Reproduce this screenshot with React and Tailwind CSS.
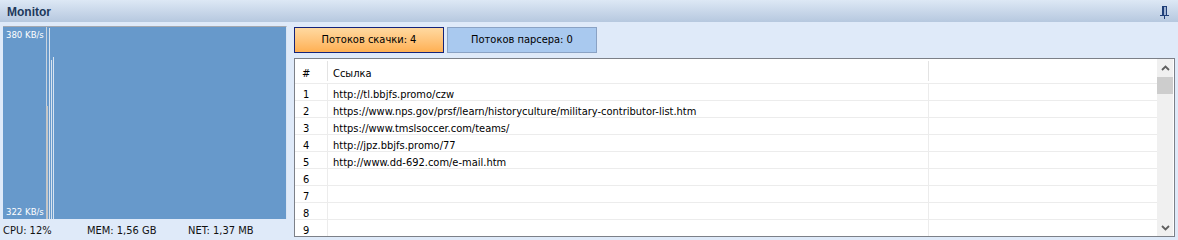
import React from "react";

const rows = [
  "http://tl.bbjfs.promo/czw",
  "https://www.nps.gov/prsf/learn/historyculture/military-contributor-list.htm",
  "https://www.tmslsoccer.com/teams/",
  "http://jpz.bbjfs.promo/77",
  "http://www.dd-692.com/e-mail.htm",
  "",
  "",
  "",
  "",
];

function Pin() {
  return (
    <svg width="10" height="13" viewBox="0 0 10 13" className="block">
      <rect x="2" y="0" width="5" height="9" fill="#9fb3d3" />
      <rect x="2" y="0" width="2" height="9" fill="#1f3f78" />
      <rect x="2" y="0" width="5" height="1" fill="#1f3f78" />
      <rect x="6" y="0" width="1" height="9" fill="#1f3f78" />
      <rect x="0" y="9" width="9" height="1" fill="#1f3f78" />
      <rect x="4" y="10" width="1" height="3" fill="#1f3f78" />
    </svg>
  );
}

export default function App() {
  return (
    <div className="w-[1178px] h-[240px] flex flex-col bg-[#dfeaf9] overflow-hidden text-black font-['DejaVu_Sans_Condensed','DejaVu_Sans',sans-serif]">
      <div className="h-[22px] shrink-0 flex items-center justify-between pl-[7px] pr-[8px] bg-gradient-to-b from-[#dde8f5] to-[#b6c8df]">
        <span className="text-[12px] leading-[14px] pt-[1px] font-bold text-[#1e395b] font-['Liberation_Sans',Arial,sans-serif]">
          Monitor
        </span>
        <div className="pt-[2px]">
          <Pin />
        </div>
      </div>
      <div className="flex flex-1 min-h-0">
        <div className="w-[294px] shrink-0 flex flex-col pt-[4px] pl-[3px]">
          <div className="relative w-[284px] h-[193px] bg-[#6799cb] border-t border-[#a3a8b0] border-r border-r-[#d9e4f2]">
            <span className="absolute left-[3px] top-[2px] text-[9.5px] text-white leading-[11px]">380 KB/s</span>
            <span className="absolute left-[3px] bottom-[2px] text-[9.5px] text-white leading-[11px]">322 KB/s</span>
            <div className="absolute left-[43px] top-0 h-full w-px bg-[#c9d3de]" />
            <div className="absolute left-[43px] top-[79px] bottom-0 w-[2px] bg-[#c4c6c8]" />
            <div className="absolute left-[46px] top-[1px] bottom-0 w-px bg-[#d7e3f0]" />
            <div className="absolute left-[48px] top-[33px] bottom-0 w-px bg-[#d7e3f0]" />
            <div className="absolute left-[50px] top-[30px] bottom-0 w-px bg-[#d7e3f0]" />
          </div>
          <div className="flex-1 flex items-center pt-[2px] text-[11px] leading-[13px] text-[#111]">
            <span className="w-[84px]">CPU: 12%</span>
            <span className="w-[101px]">MEM: 1,56 GB</span>
            <span>NET: 1,37 MB</span>
          </div>
        </div>
        <div className="flex-1 flex flex-col pt-[5px] pr-[3px]">
          <div className="flex gap-[3px] h-[26px]">
            <div className="w-[150px] flex items-center justify-center border border-[#14237a] bg-gradient-to-b from-[#ffd9a0] to-[#ffb052] text-[11px]">
              Потоков скачки: 4
            </div>
            <div className="w-[150px] flex items-center justify-center border border-[#8aa2c4] bg-[#a9c9ef] text-[11px]">
              Потоков парсера: 0
            </div>
          </div>
          <div className="mt-[5px] h-[179px] border border-[#7c8088] bg-white flex overflow-hidden">
            <div className="flex-1 flex flex-col text-[11px]">
              <div className="h-[25px] shrink-0 flex border-b border-[#ececec]">
                <div className="w-[33px] pl-[7px] pt-[6px] border-r border-[#e3e3e3] my-[2px] leading-[13px]">#</div>
                <div className="w-[601px] pl-[5px] pt-[6px] border-r border-[#e3e3e3] my-[2px] leading-[13px]">Ссылка</div>
                <div className="flex-1" />
              </div>
              {rows.map((u, i) => (
                <div key={i} className="h-[17px] shrink-0 flex border-b border-[#ececec] leading-[16px] overflow-hidden">
                  <div className="w-[33px] pl-[8px] pt-[3px] border-r border-[#ececec]">{i + 1}</div>
                  <div className="w-[601px] pl-[5px] pt-[3px] border-r border-[#ececec] whitespace-nowrap">{u}</div>
                  <div className="flex-1" />
                </div>
              ))}
            </div>
            <div className="w-[16px] mr-[1px] shrink-0 bg-[#f0f0f0] flex flex-col">
              <div className="h-[18px] w-full flex items-center justify-center">
                <svg width="9" height="6" viewBox="0 0 9 6">
                  <path d="M1 5 L4.5 1.5 L8 5" fill="none" stroke="#5f5f5f" strokeWidth="1.8" />
                </svg>
              </div>
              <div className="w-full h-[17px] bg-[#cdcdcd]" />
              <div className="flex-1" />
              <div className="h-[17px] w-full flex items-center justify-center">
                <svg width="9" height="6" viewBox="0 0 9 6">
                  <path d="M1 1 L4.5 4.5 L8 1" fill="none" stroke="#5f5f5f" strokeWidth="1.8" />
                </svg>
              </div>
            </div>
          </div>
        </div>
      </div>
    </div>
  );
}
